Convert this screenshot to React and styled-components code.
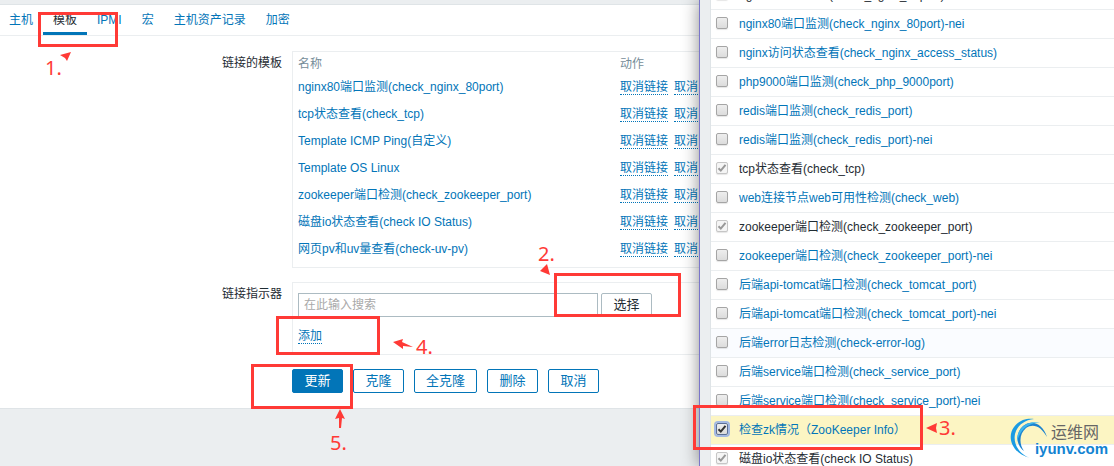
import React from "react";
import styled, { createGlobalStyle, css } from "styled-components";

const RED = "#ff3a36";
const BLUE = "#0275b8";

const GlobalStyle = createGlobalStyle`
  * { box-sizing: border-box; }
  body {
    margin: 0;
    background: #ebeef0;
    color: #1f2c33;
    font: 12px/18px "Liberation Sans", "Noto Sans CJK SC", sans-serif;
  }
  button, input { font-family: inherit; }
`;

const Page = styled.div`
  position: relative;
  display: grid;
  grid-template-columns: minmax(0, 699px) minmax(0, 1fr);
  grid-template-rows: minmax(0, 1fr);
  height: 100vh;
  overflow: hidden;
`;

const Host = styled.main`
  padding-top: 4px;
  overflow: hidden;
`;

const Panel = styled.section`
  background: #fff;
  border-top: 1px solid #dfe4e7;
  border-bottom: 1px solid #dfe4e7;
  padding-bottom: 15px;
`;

const Tabs = styled.nav`
  display: flex;
  margin-left: -1px;
  border-bottom: 1px solid #ebeef0;
`;

const Tab = styled.a`
  height: 30px;
  padding: 6px 10px 0;
  line-height: 18px;
  color: ${(p) => (p.$active ? "#1f2c33" : BLUE)};
  text-decoration: none;
  border-bottom: 3px solid ${(p) => (p.$active ? "#0275b8" : "transparent")};
`;

const Form = styled.form`
  display: flex;
  flex-direction: column;
  gap: 14px;
  padding-top: 15px;
`;

const FormRow = styled.div`
  display: grid;
  grid-template-columns: 282px 1fr;
  column-gap: 10px;
`;

const Label = styled.label`
  padding-top: 3px;
  text-align: right;
`;

const Box = styled.div`
  border: 1px solid #ebeef0;
  border-right: 0;
  padding: ${(p) => (p.$roomy ? "10px 0 9px 5px" : "3px 0 5px 5px")};
`;

const LinkedTable = styled.table`
  border-collapse: collapse;
  table-layout: fixed;
  width: 100%;

  th, td { padding: 0; text-align: left; white-space: nowrap; }
  th { height: 18px; font-weight: normal; color: #768d99; }
  th:first-child { width: 322px; }
  td { height: 27px; }
`;

const Link = styled.a`
  color: ${BLUE};
  text-decoration: none;
`;

const Action = styled.button`
  padding: 0;
  margin-right: 6px;
  border: 0;
  border-bottom: 1px dotted ${BLUE};
  background: none;
  color: ${BLUE};
  font-size: 12px;
  line-height: 13px;
  &:last-child { margin-right: 0; }
`;

const Search = styled.div`
  display: flex;
  gap: 3px;
  margin-bottom: 10px;
`;

const SearchInput = styled.input`
  width: 300px;
  height: 24px;
  padding: 0 5px;
  border: 1px solid #acbbc2;
  font-size: 12px;
  &::placeholder { color: #a9a9a9; }
`;

const Button = styled.button`
  min-width: 51px;
  height: 24px;
  padding: 0 11px;
  border: 1px solid ${BLUE};
  border-radius: 2px;
  background: #fff;
  color: ${BLUE};
  font-size: 13px;
  line-height: 22px;
  ${(p) => p.$primary && css`background: ${BLUE}; color: #fff;`}
  ${(p) => p.$grey && css`border-color: #acbbc2; color: #1f2c33;`}
`;

const Footer = styled.div`
  display: flex;
  gap: 10px;
  padding-left: 292px;
`;

const Popup = styled.aside`
  position: relative;
  padding-left: 10px;
  background: #ebeef0;
  border-left: 1px solid #7b76c9;
  box-shadow: 0 0 16px rgba(0, 0, 0, 0.45);
`;

const PickTable = styled.table`
  width: 100%;
  margin-top: -19px;
  border-collapse: separate;
  border-spacing: 0;
  border-left: 1px solid #dfe4e7;
  background: #fff;

  td { height: 29px; padding: 0; border-bottom: 1px solid #ebeef0; }
  td:first-child { width: 28px; padding: 0 0 2px 5px; }
`;

const PickRow = styled.tr`
  background: ${(p) => (p.$selected ? "#fcf5c3" : p.$hover ? "#fafcff" : "#fff")};
`;

const Check = styled.input`
  appearance: none;
  display: block;
  width: 12px;
  height: 12px;
  margin: 0;
  border: 1px solid #a5a5a5;
  border-radius: 2px;
  background: linear-gradient(#eee, #dcdcdc);
  box-shadow: 0 1px 1px rgba(0, 0, 0, 0.1);
  &:disabled { border-color: #c6c6c6; background: #f5f5f5; }
  ${(p) => p.$focused && css`box-shadow: 0 0 0 2px #a4b9e3; border-color: #5c6f95;`}
`;

const CheckCell = styled.div`
  display: grid;
  width: 12px;
  > * { grid-area: 1 / 1; }
  svg { pointer-events: none; }
`;

const Frame = styled.div`
  position: absolute;
  left: ${(p) => p.$x}px;
  top: ${(p) => p.$y}px;
  width: ${(p) => p.$w}px;
  height: ${(p) => p.$h}px;
  border: 3px solid ${RED};
`;

const StepNumber = styled.span`
  position: absolute;
  left: ${(p) => p.$x}px;
  top: ${(p) => p.$y}px;
  color: ${RED};
  font: 20px/20px "Noto Sans", sans-serif;
`;

const Arrow = styled.svg`
  position: absolute;
  left: ${(p) => p.$x}px;
  top: ${(p) => p.$y}px;
  fill: ${RED};
`;

const Logo = styled.div`
  position: absolute;
  right: 6px;
  bottom: 6px;
  display: grid;
  width: 98px;
  > * { grid-area: 1 / 1; }
`;

const LogoText = styled.div`
  display: flex;
  flex-direction: column;
  align-items: flex-end;
  padding-top: 4px;
`;

const LogoName = styled.span`
  padding-right: 9px;
  color: #666;
  font: 16px/18px "Noto Sans CJK SC", sans-serif;
`;

const LogoDomain = styled.span`
  color: #1283d2;
  font: bold 15px/18px "Liberation Sans", sans-serif;
`;

const tabs = ["主机", "模板", "IPMI", "宏", "主机资产记录", "加密"];

const linked = [
  "nginx80端口监测(check_nginx_80port)",
  "tcp状态查看(check_tcp)",
  "Template ICMP Ping(自定义)",
  "Template OS Linux",
  "zookeeper端口检测(check_zookeeper_port)",
  "磁盘io状态查看(check IO Status)",
  "网页pv和uv量查看(check-uv-pv)",
];

const templates = [
  { name: "nginx80端口监测(check_nginx_80port)", used: true },
  { name: "nginx80端口监测(check_nginx_80port)-nei" },
  { name: "nginx访问状态查看(check_nginx_access_status)" },
  { name: "php9000端口监测(check_php_9000port)" },
  { name: "redis端口监测(check_redis_port)" },
  { name: "redis端口监测(check_redis_port)-nei" },
  { name: "tcp状态查看(check_tcp)", used: true },
  { name: "web连接节点web可用性检测(check_web)" },
  { name: "zookeeper端口检测(check_zookeeper_port)", used: true },
  { name: "zookeeper端口检测(check_zookeeper_port)-nei" },
  { name: "后端api-tomcat端口检测(check_tomcat_port)" },
  { name: "后端api-tomcat端口检测(check_tomcat_port)-nei" },
  { name: "后端error日志检测(check-error-log)", hover: true },
  { name: "后端service端口检测(check_service_port)" },
  { name: "后端service端口检测(check_service_port)-nei" },
  { name: "检查zk情况（ZooKeeper Info）", selected: true },
  { name: "磁盘io状态查看(check IO Status)", used: true },
];

function TemplatePicker() {
  return (
    <Popup>
      <PickTable>
        <tbody>
          {templates.map((t, i) => (
            <PickRow key={t.name} $selected={t.selected} $hover={t.hover}>
              <td>
                <CheckCell>
                  <Check
                    type="checkbox"
                    id={`tpl-${i}`}
                    aria-label={t.name}
                    defaultChecked={t.used || t.selected}
                    disabled={t.used}
                    $focused={t.selected}
                  />
                  {(t.used || t.selected) && (
                    <svg width="12" height="12" viewBox="0 0 12 12" fill="none" stroke={t.used ? "#999" : "#333"} strokeWidth="2">
                      <path d="M2.5 6.2 L4.8 8.6 L9.5 2.8" />
                    </svg>
                  )}
                </CheckCell>
              </td>
              <td>{t.used ? <label htmlFor={`tpl-${i}`}>{t.name}</label> : <Link href="#">{t.name}</Link>}</td>
            </PickRow>
          ))}
        </tbody>
      </PickTable>
    </Popup>
  );
}

export default function App() {
  return (
    <Page>
      <GlobalStyle />
      <Host>
        <Panel>
          <Tabs>
            {tabs.map((t) => (
              <Tab key={t} href="#" $active={t === "模板"}>{t}</Tab>
            ))}
          </Tabs>
          <Form onSubmit={(e) => e.preventDefault()}>
            <FormRow>
              <Label as="span">链接的模板</Label>
              <Box>
                <LinkedTable>
                  <thead>
                    <tr><th>名称</th><th>动作</th></tr>
                  </thead>
                  <tbody>
                    {linked.map((name) => (
                      <tr key={name}>
                        <td><Link href="#">{name}</Link></td>
                        <td>
                          <Action type="button">取消链接</Action>
                          <Action type="button">取消</Action>
                        </td>
                      </tr>
                    ))}
                  </tbody>
                </LinkedTable>
              </Box>
            </FormRow>
            <FormRow>
              <Label htmlFor="search">链接指示器</Label>
              <Box $roomy>
                <Search>
                  <SearchInput id="search" placeholder="在此输入搜索" />
                  <Button type="button" $grey>选择</Button>
                </Search>
                <Action type="button">添加</Action>
              </Box>
            </FormRow>
            <Footer>
              <Button $primary>更新</Button>
              <Button type="button">克隆</Button>
              <Button type="button">全克隆</Button>
              <Button type="button">删除</Button>
              <Button type="button">取消</Button>
            </Footer>
          </Form>
        </Panel>
      </Host>

      <TemplatePicker />

      <Logo>
        <svg width="40" height="42" viewBox="0 0 40 42">
          <path d="M20 40 C3 36 -4 20 4 9 C9 2 17 0 24 1 C14 2 7 8 5 16 C3 26 9 36 20 40 Z" fill="#1b9be3" />
          <path d="M14 33 C5 26 6 14 13 8 C21 1 33 5 37 19 C31 8 23 5 16 10 C9 16 9 26 14 33 Z" fill="#1b82cf" />
          <path d="M7 24 C6 12 16 1 30 5 C18 4 10 12 7 24 Z" fill="#3cb6ee" />
        </svg>
        <LogoText>
          <LogoName>运维网</LogoName>
          <LogoDomain>iyunv.com</LogoDomain>
        </LogoText>
      </Logo>

      <Frame $x={38} $y={12} $w={80} $h={35} />
      <Frame $x={554} $y={273} $w={127} $h={44} />
      <Frame $x={693} $y={405} $w={230} $h={45} />
      <Frame $x={276} $y={316} $w={104} $h={39} />
      <Frame $x={251} $y={364} $w={102} $h={45} />

      <StepNumber $x={45} $y={58}>1.</StepNumber>
      <StepNumber $x={538} $y={244}>2.</StepNumber>
      <StepNumber $x={939} $y={418}>3.</StepNumber>
      <StepNumber $x={416} $y={337}>4.</StepNumber>
      <StepNumber $x={330} $y={433}>5.</StepNumber>

      <Arrow $x={60} $y={51} width="12" height="11"><path d="M0 4 L11 1 L7 10 L5 7 Z" /></Arrow>
      <Arrow $x={540} $y={264} width="10" height="11"><path d="M0 7 L7 0 L10 11 Z" /></Arrow>
      <Arrow $x={926} $y={422} width="12" height="12"><path d="M0 6 L11 1 L10 6 L11 11 Z" /></Arrow>
      <Arrow $x={393} $y={338} width="20" height="11"><path d="M0 4 L10 1 L9 4 L20 9 L10 8 L10 11 Z" /></Arrow>
      <Arrow $x={335} $y={409} width="11" height="19"><path d="M5 0 L10 10 L7 9 L6 19 L4 19 L4 9 L0 10 Z" /></Arrow>
    </Page>
  );
}
